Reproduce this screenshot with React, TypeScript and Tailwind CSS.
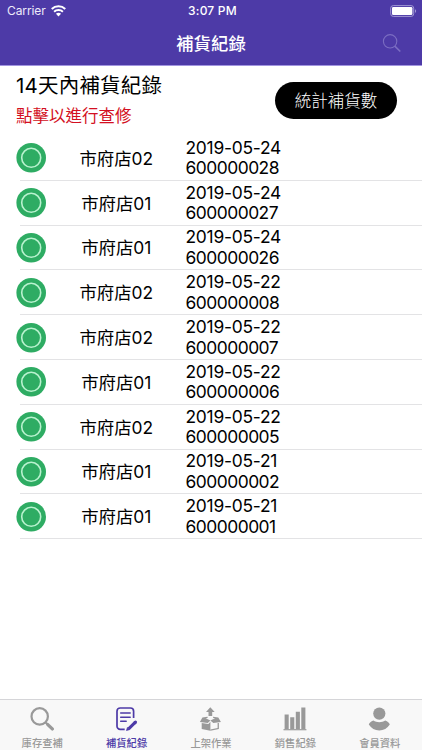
import React from "react";

const records = [
  { store: "市府店02", date: "2019-05-24", no: "600000028" },
  { store: "市府店01", date: "2019-05-24", no: "600000027" },
  { store: "市府店01", date: "2019-05-24", no: "600000026" },
  { store: "市府店02", date: "2019-05-22", no: "600000008" },
  { store: "市府店02", date: "2019-05-22", no: "600000007" },
  { store: "市府店01", date: "2019-05-22", no: "600000006" },
  { store: "市府店02", date: "2019-05-22", no: "600000005" },
  { store: "市府店01", date: "2019-05-21", no: "600000002" },
  { store: "市府店01", date: "2019-05-21", no: "600000001" },
];

function WifiIcon() {
  return (
    <svg width="15" height="12" viewBox="0 0 14 11" fill="none" stroke="#fff">
      <path d="M.7 3.7C4.2.3 9.8.3 13.3 3.7" strokeWidth="1.9" />
      <path d="M2.9 6.2C5.1 4 8.9 4 11.1 6.2" strokeWidth="1.8" />
      <path d="M7 10.6 4.6 8.1C5.9 6.9 8.1 6.9 9.4 8.1Z" fill="#fff" stroke="none" />
    </svg>
  );
}

function BatteryIcon() {
  return (
    <svg width="28" height="12" viewBox="0 0 28 12" fill="none">
      <rect x="1.7" y=".6" width="23" height="10.8" rx="2.6" stroke="#a198d4" strokeWidth="1" />
      <rect x="3" y="2" width="20.4" height="8" rx="1.3" fill="#fff" />
      <path d="M26 4.2c1.5.4 1.5 3.2 0 3.6Z" fill="#a198d4" />
    </svg>
  );
}

function NavSearchIcon() {
  return (
    <svg width="20" height="20" viewBox="0 0 20 20" fill="none" stroke="#7b6dc2">
      <circle cx="8.1" cy="7.3" r="6.7" strokeWidth="1.1" />
      <path d="m12.8 12.2 5.5 5.3" strokeWidth="1.7" />
    </svg>
  );
}

function StatusIcon() {
  return (
    <svg className="shrink-0" width="30" height="30" viewBox="0 0 30 30">
      <circle cx="15.2" cy="14.8" r="14.8" fill="#2eac63" />
      <circle cx="15.2" cy="14.8" r="9.5" fill="none" stroke="#b9f2cf" strokeWidth="1.6" />
    </svg>
  );
}

const tabs = [
  {
    label: "庫存查補",
    icon: (
      <g fill="none" stroke="currentColor">
        <circle cx="9.7" cy="9.4" r="8.2" strokeWidth="2.2" />
        <path d="m15.4 15.3 2 2" strokeWidth="2" />
        <path d="m17.8 17.6 4.5 4.3" strokeWidth="3.3" strokeLinecap="round" />
      </g>
    ),
  },
  {
    label: "補貨紀錄",
    icon: (
      <g fill="none" stroke="currentColor" strokeWidth="1.7">
        <path d="M9.7 22.4H5.2a3.2 3.2 0 0 1-3.2-3.2V4.2A3.2 3.2 0 0 1 5.2 1H15.4a3.2 3.2 0 0 1 3.2 3.2v6.8" />
        <path d="M5.7 6.1h9.5M5.7 10.3h9.5M5.7 14.3h5.5" strokeLinecap="round" strokeWidth="1.5" />
        <path d="m13.6 21.8 6.8-6.6" strokeWidth="3.1" />
        <path d="m20 15.6.5-.5" strokeWidth="3.1" strokeLinecap="round" />
        <path d="m11.4 23.6 1-3.2 2.2 2.3Z" fill="currentColor" strokeWidth=".6" />
      </g>
    ),
  },
  {
    label: "上架作業",
    icon: (
      <g fill="currentColor">
        <path d="M11.3.3 7 4.9h2.5v4h3.7v-4h2.5Z" />
        <path d="m3.4 10.5 5.2-.7v1.1l-2 .4 4.8 2.2-2.6 2.6L.9 15Z" />
        <path d="m19.3 10.5-5.2-.7v1.1l2 .4-4.7 2.2 2.9 2.6 7.6-1.1Z" />
        <path d="M2.7 15.9 9.4 17l2-2.2v9l-8.7-1.9Z" />
        <path d="m19.9 15.9-1.3.2v4.9l-7.2 1.5v1.3l8.5-1.9Z" />
      </g>
    ),
  },
  {
    label: "銷售紀錄",
    icon: (
      <g fill="currentColor">
        <path d="M1.6 7.5h4.1v14.6H1.6ZM7.2 10.3h4.1v11.8H7.2ZM12.8 4.7h4.1v17.4h-4.1ZM18.3.5h4.1v21.6h-4.1Z" />
        <path d="M.5 22.1h22.9v1.2H.5Z" />
      </g>
    ),
  },
  {
    label: "會員資料",
    icon: (
      <g fill="currentColor">
        <circle cx="11.3" cy="6.6" r="6.1" />
        <path d="M5.4 13.5c3.2 2.2 8.6 2.2 11.8 0 2.5.8 4 2.2 4.6 4.1-2.5 4-6.1 5.9-10.5 5.9S3.3 21.6.8 17.6c.6-1.9 2.1-3.3 4.6-4.1Z" />
      </g>
    ),
  },
];

export default function App() {
  return (
    <div className="flex h-[750px] w-[422px] flex-col overflow-hidden bg-white font-['Inter','Noto_Sans_CJK_TC',sans-serif] text-black">
      <header className="flex h-[66px] shrink-0 flex-col border-b border-[#a295e0] bg-[#4d3aa7] text-white">
        <div className="grid h-[22px] grid-cols-3 items-center pr-[5px] pl-[7px]">
          <div className="flex items-center gap-[5px]">
            <span className="text-[12px] leading-[22px] tracking-[-0.1px] text-[#eeeafa]">Carrier</span>
            <WifiIcon />
          </div>
          <span className="pl-px text-center text-[12px] leading-[22px] font-medium tracking-[0.2px]">3:07 PM</span>
          <div className="flex justify-end">
            <BatteryIcon />
          </div>
        </div>
        <div className="grid h-[43px] grid-cols-[1fr_auto_1fr] items-center">
          <span />
          <h1 className="text-[17.4px] leading-[43px] font-medium">補貨紀錄</h1>
          <button className="mr-5 justify-self-end" aria-label="搜尋">
            <NavSearchIcon />
          </button>
        </div>
      </header>

      <main className="flex min-h-0 flex-1 flex-col">
        <section className="flex h-[70px] shrink-0 justify-between pr-[25px] pl-4">
          <div className="pt-[5px]">
            <h2 className="text-[20.5px] leading-[30px] tracking-[0.2px]">14天內補貨紀錄</h2>
            <p className="text-[16.5px] leading-[31px] text-[#d30f22]">點擊以進行查修</p>
          </div>
          <button className="mt-4 h-[37px] w-[122px] rounded-full bg-black pt-px text-[16.5px] leading-[37px] font-light text-white">
            統計補貨數
          </button>
        </section>
        <ul>
          {records.map((record) => (
            <li key={record.no} className="flex h-[44.8px] items-center pl-4">
              <StatusIcon />
              <div className="ml-[-26px] flex h-full flex-1 items-center border-b border-[#e3e3e5]">
                <span className="w-[165.5px] pt-0.5 pl-[27px] text-center text-[17.4px]">{record.store}</span>
                <span className="flex flex-col pt-px text-[17.4px] leading-[20.5px]">
                  <span className="tracking-[-0.25px]">{record.date}</span>
                  <span className="tracking-[-0.5px]">{record.no}</span>
                </span>
              </div>
            </li>
          ))}
        </ul>
      </main>

      <nav className="grid h-[51px] shrink-0 grid-cols-5 border-t border-[#d5d5d8] bg-[#f8f8f8]">
        {tabs.map((tab, index) => (
          <button
            key={tab.label}
            className={`flex flex-col items-center pt-[7px] ${index === 1 ? "text-[#4d3aa7]" : "text-[#999999]"}`}
          >
            <svg width="24" height="24" viewBox="0 0 24 24">
              {tab.icon}
            </svg>
            <span className="mt-[5px] text-[10.3px] leading-[14px] font-medium">{tab.label}</span>
          </button>
        ))}
      </nav>
    </div>
  );
}
